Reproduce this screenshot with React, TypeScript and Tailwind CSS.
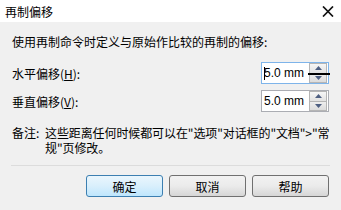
import React from "react";

const cjk = { fontFamily: '"Noto Sans CJK SC", "Noto Sans", sans-serif' };

function Spinner() {
  return (
    <div className="flex flex-col shrink-0 w-[18px] h-[20px] my-auto mr-[1px]">
      <div className="flex-1 border border-[#b5b5b5] bg-gradient-to-b from-[#f6f6f6] to-[#e2e2e2] flex items-center justify-center">
        <svg width="7" height="4" viewBox="0 0 7 4"><path d="M3.5 0 L7 4 L0 4 Z" fill="#4e5f82" /></svg>
      </div>
      <div className="flex-1 border border-t-0 border-[#b5b5b5] bg-gradient-to-b from-[#eeeeee] to-[#dcdcdc] flex items-center justify-center">
        <svg width="7" height="4" viewBox="0 0 7 4"><path d="M0 0 L7 0 L3.5 4 Z" fill="#4e5f82" /></svg>
      </div>
    </div>
  );
}

function Field({ focused }: { focused?: boolean }) {
  return (
    <div
      className={`relative flex items-stretch w-[68px] h-[22px] bg-white border ${
        focused ? "border-[#7eb4ea]" : "border-[#abadb3]"
      }`}
    >
      <div
        className="flex-1 min-w-0 flex items-center pl-[2px] text-[12px] text-black whitespace-nowrap overflow-hidden"
        style={{ fontFamily: '"Liberation Sans", Arial, sans-serif' }}
      >
        {focused && <span className="shrink-0 w-[1px] h-[13px] bg-black -mr-[1px]" />}
        <span>5.0 mm</span>
      </div>
      <Spinner />
      {focused && <div className="absolute left-[46px] top-[10px] w-[22px] h-[2px] bg-black" />}
    </div>
  );
}

function Btn({ label, primary }: { label: string; primary?: boolean }) {
  return (
    <div
      className={`w-[77px] h-[22px] rounded-[3px] border flex items-center justify-center text-[12px] text-black ${
        primary
          ? "border-[#3c7fb1] bg-gradient-to-b from-[#eaf6fd] via-[#d9effc] to-[#bee6fd]"
          : "border-[#707070] bg-gradient-to-b from-[#f2f2f2] via-[#ebebeb] to-[#d6d6d6]"
      }`}
    >
      {label}
    </div>
  );
}

export default function App() {
  return (
    <div className="w-[341px] h-[210px] bg-[#f0f0f0] flex flex-col overflow-hidden text-[#1e1e1e]" style={cjk}>
      <div className="h-[22px] bg-white flex items-center justify-between pl-[5px] pr-[7px]">
        <span className="text-[12px] leading-[15px] text-black">再制偏移</span>
        <svg width="12" height="11" viewBox="0 0 12 11" className="mt-[1px]">
          <path d="M1 0.5 L11 10.5 M11 0.5 L1 10.5" stroke="#111" strokeWidth="1.7" />
        </svg>
      </div>
      <div className="flex flex-col px-[12px] text-[12px] leading-[15px] text-black">
        <div className="mt-[12px]">使用再制命令时定义与原始作比较的再制的偏移:</div>
        <div className="mt-[13px] flex items-center justify-between">
          <span>
            水平偏移(<span className="underline">H</span>):
          </span>
          <Field focused />
        </div>
        <div className="mt-[6px] flex items-center justify-between">
          <span>
            垂直偏移(<span className="underline">V</span>):
          </span>
          <Field />
        </div>
        <div className="mt-[13px] flex whitespace-nowrap">
          <span className="shrink-0 w-[33px]">备注:</span>
          <span className="tracking-[-0.1px]">
            这些距离任何时候都可以在"选项"对话框的"文档"&gt;"常
            <br />
            规"页修改。
          </span>
        </div>
        <div className="mt-[10px] h-[1px] bg-[#dcdcdc] -mx-[1px]" />
        <div className="mt-[9px] flex justify-end gap-[6px] pr-[0px]">
          <Btn label="确定" primary />
          <Btn label="取消" />
          <Btn label="帮助" />
        </div>
      </div>
    </div>
  );
}
